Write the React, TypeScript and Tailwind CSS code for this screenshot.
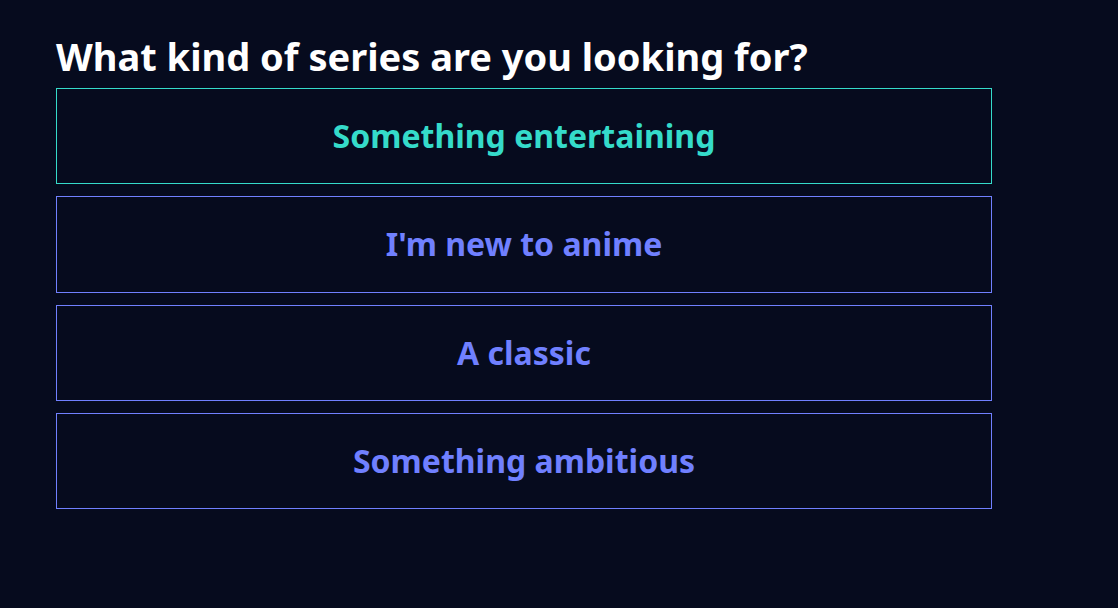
import { useState } from "react";

const options = [
  "Something entertaining",
  "I'm new to anime",
  "A classic",
  "Something ambitious",
];

export default function App() {
  const [active, setActive] = useState(0);

  return (
    <main className="min-h-screen bg-[#060b1e] pt-9 pr-[126px] pb-9 pl-14 font-['Noto_Sans',sans-serif]">
      <h1 className="mb-3 text-[38px] leading-10 font-bold text-white">
        What kind of series are you looking for?
      </h1>
      <div className="grid min-h-[421px] auto-rows-fr gap-3">
        {options.map((label, i) => (
          <button
            key={label}
            type="button"
            onClick={() => setActive(i)}
            className={
              "border px-4 py-6 text-[32px] leading-10 font-bold " +
              (i === active
                ? "border-[#35dbca] text-[#35dbca]"
                : "border-[#7080ff] text-[#7080ff]")
            }
          >
            {label}
          </button>
        ))}
      </div>
    </main>
  );
}
